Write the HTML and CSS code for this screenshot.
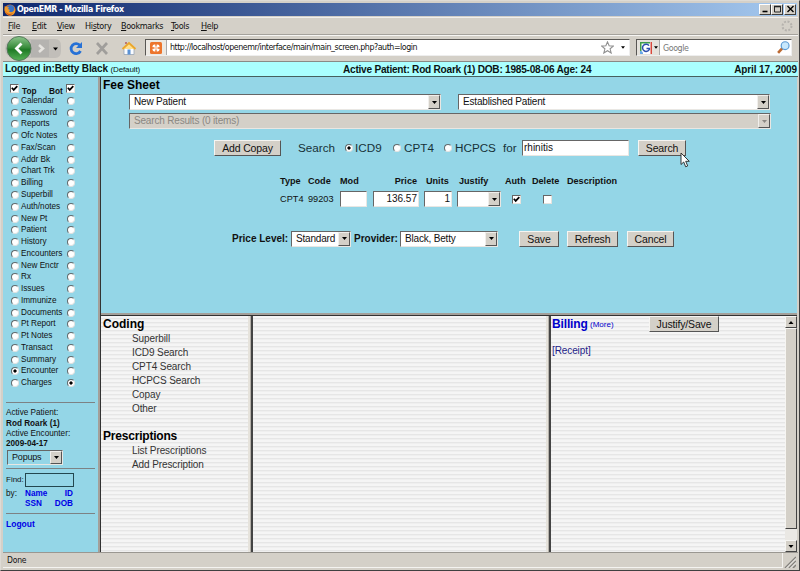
FILE: index.html
```html
<!DOCTYPE html>
<html lang="en">
<head>
<meta charset="utf-8">
<title>OpenEMR</title>
<link rel="stylesheet" href="styles.css">
</head>
<body>
<svg width="0" height="0" class="defs">
  <symbol id="down" viewBox="0 0 5 3"><path d="M0 0h5L2.500 3z"/></symbol>
  <symbol id="tick" viewBox="0 0 7 7"><path d="M.8 2.800L2.700 4.900 6.300 1.200" fill="none" stroke="#000" stroke-width="1.700"/></symbol>
</svg>
<div class="window">
  <header class="titlebar">
    <svg class="fox" viewBox="0 0 12 12"><circle cx="6" cy="6" r="5.500" fill="#e8791e"/><circle cx="6.500" cy="4.800" r="3.800" fill="#3a72c4"/><path d="M.8 2l2 1.200 2.200-.2L4 5l2 1-1 1.500c2 1.500 5 .5 6-3C12 9 9 11.500 6 11.500S-.5 8 .8 2z" fill="#f09a2a"/><path d="M1 6c1 4 5 5 8 3-2 3-7 3-8-3z" fill="#c94a14"/></svg>
    <span class="caption">OpenEMR - Mozilla Firefox</span>
    <div class="winbtns">
      <i><svg viewBox="0 0 9 8"><path d="M1.500 6.500h5" stroke="#000" stroke-width="1.600"/></svg></i>
      <i><svg viewBox="0 0 9 8"><path d="M1 1.500h7" stroke="#222" stroke-width="1.600"/><path d="M1.500 1v6h6V1" fill="none" stroke="#222"/></svg></i>
      <i class="x"><svg viewBox="0 0 9 8"><path d="M1.500 1l6 6M7.500 1l-6 6" stroke="#000" stroke-width="1.400"/></svg></i>
    </div>
  </header>
  <nav class="menubar">
    <span class="m1"><u>F</u>ile</span><span class="m2"><u>E</u>dit</span><span class="m3"><u>V</u>iew</span><span class="m4">Hi<u>s</u>tory</span><span class="m5"><u>B</u>ookmarks</span><span class="m6"><u>T</u>ools</span><span class="m7"><u>H</u>elp</span>
    <svg class="throbber" viewBox="0 0 12 12"><circle cx="6" cy="6" r="4.500" fill="none" stroke="#b5b2ad" stroke-width="2" stroke-dasharray="2 1.530"/></svg>
  </nav>
  <div class="toolbar">
    <svg class="navicons" width="140" height="27" viewBox="0 0 140 27">
      <defs><linearGradient id="g" x1="0" y1="0" x2="0" y2="1"><stop offset="0" stop-color="#8cc58c"/><stop offset=".45" stop-color="#3c8e3e"/><stop offset=".55" stop-color="#1f7a25"/><stop offset="1" stop-color="#57b357"/></linearGradient></defs>
      <path d="M10 4h42q6 0 6 7v5q0 7-6 7H10q-8-2-8-9.500T10 4z" fill="#c1beb9"/>
      <path d="M28 5h18v17H28z" fill="#b5b3b0"/>
      <circle cx="16" cy="13.500" r="12" fill="url(#g)" stroke="#54785a"/>
      <path d="M18.500 8.500l-5 5 5 5" fill="none" stroke="#fff" stroke-width="2.800"/>
      <path d="M36 10l4 3.500-4 3.500" fill="none" stroke="#e6e4e0" stroke-width="2.500"/>
      <path d="M50 12.500h5l-2.500 3z"/>
      <path d="M77 10.500A5 5 0 1 0 77.500 16" fill="none" stroke="#2671d6" stroke-width="2.800"/><path d="M79 7v6h-6z" fill="#2671d6"/>
      <path d="M94 8l10 11M104 8L94 19" stroke="#a09e9b" stroke-width="2.700"/>
      <path d="M121 13h10v6.500h-10z" fill="#fafcff" stroke="#98a5b5" stroke-width=".8"/><path d="M122 9V7h2v2" fill="#b77"/><path d="M119.500 14l6.500-6 6.500 6" fill="#ffdf8c" stroke="#eaa62b" stroke-width="1.800"/><path d="M124.500 14.500h3v5h-3z" fill="#5b92d4"/>
    </svg>
    <div class="url">
      <div class="site"><svg viewBox="0 0 12 12"><rect width="12" height="12" rx="1.500" fill="#ed752c"/><rect x="2.500" y="2.500" width="7" height="7" rx="2" fill="#fff"/><path d="M6 2v2.500M6 7.500V10M2 6h2.500M7.500 6H10" stroke="#ed752c" stroke-width="1.300"/><circle cx="6" cy="6" r=".7" fill="#ed752c"/></svg></div>
      <span class="addr">http://localhost/openemr/interface/main/main_screen.php?auth=login</span>
      <svg class="star" viewBox="0 0 12 12"><path d="M6 .8l1.500 3.600 3.900.3-3 2.500 1 3.900L6 9l-3.400 2.100 1-3.900-3-2.500 3.900-.3z" fill="#fff" stroke="#8f8f8f"/></svg>
      <svg class="drop"><use href="#down"/></svg>
    </div>
    <div class="find">
      <div class="engine"><svg class="glogo" viewBox="0 0 12 12"><path d="M0 0h12v12H0z" fill="#fff"/><path d="M0 0h10v1.500H1.500V9H0z" fill="#3f9e48"/><path d="M10.500 0H12v12h-1.500z" fill="#d8483c"/><path d="M0 9h1.500l1.500 1.500V12H0z" fill="#67a8e8"/><path d="M9 3.600A3.600 3.600 0 1 0 9.300 7.500V6.500H6.500" fill="none" stroke="#2c4fae" stroke-width="1.500"/></svg><svg class="drop"><use href="#down"/></svg></div>
      <span class="google">Google</span>
      <svg class="lens" viewBox="0 0 12 12"><path d="M1 11l4-4.500" stroke="#bd6a32" stroke-width="2.400"/><circle cx="7.500" cy="4.300" r="3.600" fill="#c8e8fc" stroke="#5c9bd4" stroke-width="1.100"/></svg>
    </div>
  </div>
  <div class="banner">
    <div class="who"><b>Logged in:Betty Black</b> <small>(Default)</small></div>
    <b class="patient">Active Patient: Rod Roark (1) DOB: 1985-08-06 Age: 24</b>
    <b class="date">April 17, 2009</b>
  </div>
  <div class="frames">
    <aside class="side">
      <div class="sidehead"><i class="cb on"><svg><use href="#tick"/></svg></i><b>Top</b><b class="bot">Bot</b><i class="cb on"><svg><use href="#tick"/></svg></i></div>
      <ul class="nav">
        <li><i></i><span>Calendar</span><i></i></li>
        <li><i></i><span>Password</span><i></i></li>
        <li><i></i><span>Reports</span><i></i></li>
        <li><i></i><span>Ofc Notes</span><i></i></li>
        <li><i></i><span>Fax/Scan</span><i></i></li>
        <li><i></i><span>Addr Bk</span><i></i></li>
        <li><i></i><span>Chart Trk</span><i></i></li>
        <li><i></i><span>Billing</span><i></i></li>
        <li><i></i><span>Superbill</span><i></i></li>
        <li><i></i><span>Auth/notes</span><i></i></li>
        <li><i></i><span>New Pt</span><i></i></li>
        <li><i></i><span>Patient</span><i></i></li>
        <li><i></i><span>History</span><i></i></li>
        <li><i></i><span>Encounters</span><i></i></li>
        <li><i></i><span>New Enctr</span><i></i></li>
        <li><i></i><span>Rx</span><i></i></li>
        <li><i></i><span>Issues</span><i></i></li>
        <li><i></i><span>Immunize</span><i></i></li>
        <li><i></i><span>Documents</span><i></i></li>
        <li><i></i><span>Pt Report</span><i></i></li>
        <li><i></i><span>Pt Notes</span><i></i></li>
        <li><i></i><span>Transact</span><i></i></li>
        <li><i></i><span>Summary</span><i></i></li>
        <li><i class="sel"></i><span>Encounter</span><i></i></li>
        <li><i></i><span>Charges</span><i class="sel"></i></li>
      </ul>
      <div class="rule"></div>
      <div class="active">Active Patient:<br><b>Rod Roark (1)</b><br>Active Encounter:<br><b>2009-04-17</b></div>
      <div class="select popups"><span>Popups</span><i class="arrow"><svg><use href="#down"/></svg></i></div>
      <div class="rule r2"></div>
      <div class="finder"><span>Find:</span><i class="findbox"></i></div>
      <div class="by"><span>by:</span><a>Name</a><a class="r">ID</a><span></span><a>SSN</a><a class="r">DOB</a></div>
      <div class="rule r3"></div>
      <a class="logout">Logout</a>
    </aside>
    <div class="vsplit"></div>
    <main>
      <section class="fee">
        <h1>Fee Sheet</h1>
        <div class="picks">
          <div class="select wide"><span>New Patient</span><i class="arrow"><svg><use href="#down"/></svg></i></div>
          <div class="select wide"><span>Established Patient</span><i class="arrow"><svg><use href="#down"/></svg></i></div>
        </div>
        <div class="select results"><span>Search Results (0 items)</span><i class="arrow"><svg><use href="#down"/></svg></i></div>
        <div class="searchrow">
          <button class="copay">Add Copay</button>
          <span class="lbl">Search</span>
          <i class="radio sel"></i><span class="o1">ICD9</span>
          <i class="radio"></i><span class="o2">CPT4</span>
          <i class="radio"></i><span class="o3">HCPCS</span>
          <span class="for">for</span>
          <span class="input term">rhinitis</span>
          <button class="go">Search</button>
        </div>
        <div class="codes">
          <b>Type</b><b>Code</b><b>Mod</b><b class="r">Price</b><b>Units</b><b>Justify</b><b>Auth</b><b>Delete</b><b>Description</b>
          <span>CPT4</span><span>99203</span><span class="input mod"></span><span class="input price">136.57</span><span class="input units">1</span>
          <div class="select justify"><span></span><i class="arrow"><svg><use href="#down"/></svg></i></div>
          <i class="cb on auth"><svg><use href="#tick"/></svg></i><i class="cb del"></i><span></span>
        </div>
        <div class="actions">
          <b class="pl">Price Level:</b>
          <div class="select std"><span>Standard</span><i class="arrow"><svg><use href="#down"/></svg></i></div>
          <b class="pv">Provider:</b>
          <div class="select prov"><span>Black, Betty</span><i class="arrow"><svg><use href="#down"/></svg></i></div>
          <button class="save">Save</button><button class="refresh">Refresh</button><button class="cancel">Cancel</button>
        </div>
        <svg class="pointer" viewBox="0 0 10 16"><path d="M1 1v11.500l2.700-2.500 2 4.800 2-.9-2-4.600h3.600z" fill="#fff" stroke="#222" stroke-width=".9"/></svg>
      </section>
      <div class="hsplit"></div>
      <div class="lower">
        <section class="coding">
          <h2>Coding</h2>
          <ul><li>Superbill</li><li>ICD9 Search</li><li>CPT4 Search</li><li>HCPCS Search</li><li>Copay</li><li>Other</li></ul>
          <h2 class="rx">Prescriptions</h2>
          <ul><li>List Prescriptions</li><li>Add Prescription</li></ul>
        </section>
        <div class="split"></div>
        <section class="blank"></section>
        <div class="split"></div>
        <section class="billing">
          <div class="bill">
            <div class="billhead"><b>Billing</b><small>(More)</small><button class="js">Justify/Save</button></div>
            <a class="receipt">[Receipt]</a>
          </div>
          <div class="scroll"><i><svg class="up"><use href="#down"/></svg></i><div class="thumb"></div><div class="track"></div><i><svg><use href="#down"/></svg></i></div>
        </section>
      </div>
    </main>
  </div>
  <footer class="status"><span>Done</span><svg class="grip" viewBox="0 0 12 12"><path d="M1 12L12 1M5 12l7-7M9 12l3-3" stroke="#85827d" stroke-width="1.500"/><path d="M2.200 12.200l10-10M6.200 12.200l6-6" stroke="#fff" stroke-width=".7"/></svg></footer>
</div>
</body>
</html>
```

FILE: styles.css
```css
* { box-sizing: border-box; }
body { margin: 0; font-family: "Liberation Sans", Arial, sans-serif; font-size: 10px; color: #111; overflow: hidden; }
i { display: block; font-style: normal; flex: none; }
svg { display: block; flex: none; }
ul { list-style: none; margin: 0; padding: 0; }
h1, h2 { margin: 0; font-size: 12px; line-height: 14px; color: #000; }
.defs { position: absolute; }
.window { width: 800px; height: 571px; display: flex; flex-direction: column; background: #d4d0c8; border: 1px solid; border-color: #dedbd5 #404040 #404040 #dedbd5; padding: 2px 1px 2px 2px; white-space: nowrap; }

.titlebar { height: 13px; margin-right: 1px; background: linear-gradient(90deg, #0e276d, #a6caf0); display: flex; align-items: center; flex: none; }
.fox { width: 12px; height: 12px; margin-left: 1px; }
.caption { font: bold 8.8px/13px "DejaVu Sans Condensed", "DejaVu Sans", sans-serif; color: #fff; margin-left: 1px; letter-spacing: -.42px; flex: 1; }
.winbtns { display: flex; margin-right: 1px; }
.winbtns i { width: 12px; height: 11px; background: #d4d0c8; border: 1px solid; border-color: #fff #404040 #404040 #fff; }
.winbtns .x { margin-left: 1px; }
.winbtns svg { width: 9px; height: 8px; margin-left: 1px; }

.menubar { height: 18px; border-bottom: 1px solid #a5a29c; margin-top: 1px; border-top: 1px solid #f1efec; display: flex; align-items: center; flex: none; font: 9px/16px "DejaVu Sans Condensed", "DejaVu Sans", sans-serif; letter-spacing: -.35px; padding-left: 5px; }
.menubar span { flex: none; }
.m1 { width: 24px; } .m2 { width: 25px; } .m3 { width: 28px; } .m4 { width: 36px; } .m5 { width: 50px; } .m6 { width: 30px; }
.throbber { width: 12px; height: 12px; margin-left: auto; margin-right: 5px; }

.toolbar { height: 26px; display: flex; align-items: center; flex: none; border-top: 1px solid #f6f5f3; }
.navicons { width: 140px; height: 27px; margin-top: -1px; }
.url, .find { height: 17px; background: #fff; border: 1px solid; border-color: #595754 #eee #eee #595754; display: flex; align-items: center; }
.url { width: 485px; margin-left: 2px; margin-bottom: 2px; }
.site { width: 21px; height: 15px; background: #ece9e3; border-right: 1px solid #aaa; display: flex; justify-content: center; align-items: center; }
.site svg { width: 12px; height: 12px; }
.addr { font: 8.8px/15px "DejaVu Sans Condensed", "DejaVu Sans", sans-serif; letter-spacing: -.45px; margin-left: 3px; flex: 1; }
.star { width: 13px; height: 13px; }
.drop { width: 4px; height: 3px; margin: 0 4px 0 7px; }
.find { width: 156px; margin-left: 6px; margin-bottom: 2px; }
.engine { width: 23px; height: 15px; background: #e5e2dc; border-right: 1px solid #aaa; display: flex; align-items: center; }
.glogo { width: 12px; height: 12px; margin-left: 3px; }
.engine .drop { margin: 0 0 0 2px; }
.google { font: 8.8px "DejaVu Sans Condensed", sans-serif; letter-spacing: -.4px; color: #777; margin-left: 3px; flex: 1; }
.lens { width: 13px; height: 13px; margin-right: 1px; }

.banner { height: 16px; background: #aff; border-top: 1px solid #8a8a86; border-bottom: 1px solid #47605f; display: flex; align-items: center; flex: none; color: #0a1414; font-size: 10px; line-height: 16px; padding-top: 1px; }
.who { width: 340px; padding-left: 2px; letter-spacing: -.13px; }
.who small { font-size: 8px; }
.patient { letter-spacing: -.24px; }
.date { margin-left: auto; margin-right: 1px; letter-spacing: -.12px; }
.patient { font-size: 10.100px; }

.frames { flex: 1; display: flex; min-height: 0; margin-right: 1px; }
.side { width: 95px; flex: none; background: #94d6e7; font-size: 8px; line-height: 10px; display: flex; flex-direction: column; align-items: flex-start; }
.sidehead { display: flex; height: 18px; padding: 5px 0 0 7px; font-size: 8.3px; align-items: center; }
.sidehead b { margin: 4px 0 0 3px; width: 25px; }
.sidehead .bot { width: 17px; margin-left: 2px; margin-right: 0; }
.cb { width: 9px; height: 9px; background: #fff; border: 1px solid; border-color: #666 #e6e3de #e6e3de #666; }
.cb svg { width: 7px; height: 7px; }
.nav { width: 95px; }
.nav li { height: 11.770px; display: flex; align-items: center; padding-left: 8px; }
.nav span { width: 48px; padding-left: 2px; font-size: 8.200px; }
.nav i, .radio { width: 8px; height: 8px; border-radius: 50%; background: #fff; border: 1px solid; border-color: #606a6c #e2e2e0 #e2e2e0 #606a6c; }
.nav .sel, .radio.sel { background: radial-gradient(circle, #000 0 1.300px, #fff 1.900px); }
.rule { width: 89px; height: 1px; background: #7d8284; margin: 13px 0 0 3px; }
.active { margin: 5px 0 0 3px; font-size: 8.200px; line-height: 10.400px; }
.select { background: #fff; border: 1px solid; border-color: #666 #e9e7e3 #e9e7e3 #666; height: 15px; display: flex; font-size: 10px; line-height: 13px; letter-spacing: -.18px; }
.select span { flex: 1; padding-left: 4px; }
.arrow { width: 12px; height: 100%; background: #d4d0c8; border: 1px solid; border-color: #f1efec #555 #555 #f1efec; display: flex; align-items: center; justify-content: center; }
.arrow svg { width: 5px; height: 3px; }
.popups { width: 56px; margin: 0 0 0 4px; background: #94d6e7; font-size: 9px; }
.rule.r2 { margin-top: 3px; }
.finder { display: flex; margin: 4px 0 0 3px; align-items: center; height: 15px; }
.finder span { width: 19px; }
.findbox { width: 49px; height: 14px; border: 1px solid #23474f; }
.by { display: grid; grid-template-columns: 19px 24px 24px; margin: 1px 0 0 3px; line-height: 10.300px; font-size: 8.200px; }
.by a, .logout { color: #0000e6; font-weight: bold; }
.r { text-align: right; }
.rule.r3 { margin-top: 4px; }
.logout { margin: 5px 0 0 3px; font-size: 8.500px; }
.vsplit { width: 3px; background: linear-gradient(90deg, #a39f99 0 2px, #333 2px); flex: none; }

main { flex: 1; display: flex; flex-direction: column; min-width: 0; }
.fee { height: 236px; background: #94d6e7; padding: 1px 0 0 2px; position: relative; flex: none; }
.picks { display: flex; gap: 17px; margin: 2px 0 0 26px; }
.wide { width: 312px; height: 16px; }
.select.results { width: 642px; height: 16px; margin: 3px 0 0 26px; background: #d4d0c8; color: #8b8883; border-color: #666 #e9e7e3 #e9e7e3 #666; }
.results .arrow svg { fill: #8b8883; }
button { font: 10.500px/14px "Liberation Sans", Arial, sans-serif; letter-spacing: -.15px; padding: 0; height: 16px; background: #d4d0c8; border: 1px solid; border-color: #f6f5f2 #555 #555 #f6f5f2; color: #111; flex: none; }
.searchrow { display: flex; align-items: center; margin: 10px 0 0 111px; height: 17px; font-size: 11.700px; color: #173238; }
.searchrow > * { flex: none; }
.copay { width: 67px; }
.lbl { margin-left: 17px; width: 47px; }
.o1 { width: 40px; padding-left: 2px; } .o2 { width: 43px; padding-left: 3px; } .o3 { width: 51px; padding-left: 3px; } .for { width: 19px; }
.input { background: #fff; border: 1px solid; border-color: #666 #e9e7e3 #e9e7e3 #666; font-size: 10px; line-height: 14px; height: 16px; display: block; color: #111; padding: 0 1px; }
.term { width: 107px; }
.go { width: 48px; margin-left: 9px; }
.codes { display: grid; grid-template-columns: 28px 32px 33px 51px 33px 48px 27px 35px 60px; grid-template-rows: 12px 18px; row-gap: 3px; margin: 19px 0 0 177px; align-items: center; font-size: 9.200px; }
.codes b { font-size: 9.100px; }
.codes .r { padding-right: 7px; }
.codes b:nth-child(5) { padding-left: 2px; }
.codes b:nth-child(6) { padding-left: 2px; }
.mod { width: 27px; } .price, .units { text-align: right; } .price { width: 46px; } .units { width: 28px; }
.select.justify { width: 44px; height: 16px; }
.auth { margin-left: 7px; } .del { margin-left: 11px; }
.actions { display: flex; align-items: center; margin: 22px 0 0 129px; height: 17px; font-size: 10px; }
.pl { width: 59px; } .pv { width: 46px; margin-left: 3px; }
.std { width: 60px; height: 16px; flex: none; } .prov { width: 98px; height: 16px; flex: none; }
.save { width: 40px; margin-left: 21px; } .refresh { width: 51px; margin-left: 8px; } .cancel { width: 47px; margin-left: 9px; }
.pointer { position: absolute; left: 579px; top: 75px; width: 10px; height: 16px; }
.hsplit { height: 3px; background: linear-gradient(#a39f99 0 2px, #333 2px); flex: none; }
.lower { flex: 1; display: flex; min-height: 0; }
.coding, .blank, .bill { background: repeating-linear-gradient(#f5f5f5 0 2px, #e6e6e6 2px 3px, #efefef 3px 4px); }
.coding { width: 147px; padding: 1px 0 0 2px; }
.coding li { height: 14px; line-height: 14px; padding-left: 29px; font-size: 10px; color: #333; letter-spacing: -.1px; }
.coding ul { margin-top: 1px; }
.coding .rx { margin-top: 13px; letter-spacing: -.2px; }
.split { width: 5px; background: linear-gradient(90deg, #e6e3dc 0 2px, #b4b0a9 2px 3px, #444 3px 5px); flex: none; }
.blank { width: 293px; }
.billing { flex: 1; display: flex; }
.bill { flex: 1; padding-left: 1px; }
.billhead { display: flex; height: 16px; align-items: center; color: #0000cc; }
.billhead b { font-size: 12px; width: 35px; letter-spacing: -.15px; }
.billhead small { font-size: 8px; margin-left: 3px; width: 24px; }
.js { width: 70px; margin-left: 35px; }
.receipt { display: block; margin-top: 12px; color: #1d1d88; font-size: 10px; line-height: 14px; letter-spacing: -.1px; }
.scroll { width: 12px; display: flex; flex-direction: column; background: #eae8e4; }
.scroll i, .thumb { border: 1px solid; border-color: #f6f5f2 #444 #444 #f6f5f2; background: #d4d0c8; }
.scroll i { height: 12px; display: flex; align-items: center; justify-content: center; }
.scroll svg { width: 6px; height: 3px; }
.up { transform: rotate(180deg); }
.thumb { height: 201px; } .track { flex: 1; }

.status { height: 16px; flex: none; display: flex; border-top: 1px solid #9a9791; }
.status span { width: 780px; border-right: 1px solid #f4f3f0; border-bottom: 1px solid #f4f3f0; font: 8.500px/15px "DejaVu Sans Condensed", sans-serif; letter-spacing: -.2px; padding-left: 4px; }
.grip { width: 12px; height: 12px; margin: 3px 0 0 1px; }
```
